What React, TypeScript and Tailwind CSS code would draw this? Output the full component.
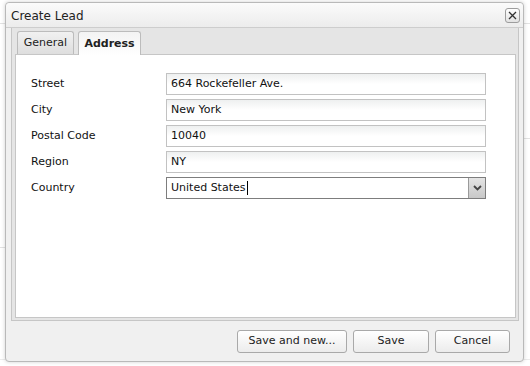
import React from "react";

const font = { fontFamily: '"DejaVu Sans", Verdana, sans-serif' };

function Field({ label, value, select, caret }: { label: string; value: string; select?: boolean; caret?: boolean }) {
  return (
    <div className="flex items-center h-[22px]">
      <div className="w-[135px] text-[11px] text-[#111]">{label}</div>
      {select ? (
        <div className="w-[320px] h-[22px] flex border border-[#7d7d7d] bg-white">
          <div className="flex-1 flex items-center pl-[4px] text-[11px] text-[#111]">
            {value}
            {caret && <span className="inline-block w-px h-[14px] bg-black ml-[1px]" />}
          </div>
          <div className="w-[17px] h-full border-l border-[#9a9a9a] bg-gradient-to-b from-[#e4e4e4] to-[#c8c8c8] flex items-center justify-center">
            <svg width="9" height="6" viewBox="0 0 9 6">
              <path d="M1 1 L4.5 4.5 L8 1" stroke="#444" strokeWidth="1.8" fill="none" />
            </svg>
          </div>
        </div>
      ) : (
        <div className="w-[320px] h-[22px] flex items-center pl-[4px] border border-[#c2c2c2] bg-gradient-to-b from-[#eef0f0] via-white to-white text-[11px] text-[#111]">
          {value}
        </div>
      )}
    </div>
  );
}

function Btn({ children, w }: { children: React.ReactNode; w: string }) {
  return (
    <div className={`${w} h-[23px] flex items-center justify-center rounded-[3px] border border-[#a9a9a9] bg-gradient-to-b from-white to-[#ececec] text-[11px] text-[#222]`}>
      {children}
    </div>
  );
}

export default function App() {
  return (
    <div className="relative w-[530px] h-[366px] bg-white overflow-hidden" style={font}>
      {/* backdrop page lines */}
      <div className="absolute left-0 top-[23px] w-[6px] h-px bg-[#e2e2e2]" />
      <div className="absolute left-0 top-[247px] w-[6px] h-px bg-[#e2e2e2]" />
      <div className="absolute right-0 top-[23px] w-[6px] h-px bg-[#e2e2e2]" />
      <div className="absolute right-0 top-[138px] w-[6px] h-px bg-[#e2e2e2]" />
      <div className="absolute left-0 top-[359px] w-[530px] h-px bg-[#ececec]" />

      <div className="absolute left-[5px] top-[2px] w-[519px] h-[360px] flex flex-col border border-[#b9b9b9] rounded-[4px] bg-[#f0f0f0] shadow-[0_0_4px_rgba(0,0,0,0.18)]">
        {/* header */}
        <div className="h-[25px] flex items-center justify-between pl-[5px] pr-[3px] border-b border-[#cdcdcd] rounded-t-[4px] bg-gradient-to-b from-[#fbfbfb] to-[#ececec]">
          <span className="text-[12px] text-[#222] pt-[1px]">Create Lead</span>
          <div className="w-[15px] h-[15px] border border-[#9d9d9d] rounded-[3px] bg-gradient-to-b from-white to-[#e2e2e2] flex items-center justify-center">
            <svg width="9" height="9" viewBox="0 0 9 9">
              <path d="M1 1 L8 8 M8 1 L1 8" stroke="#333" strokeWidth="1.3" />
            </svg>
          </div>
        </div>

        {/* tab panel */}
        <div className="h-[293px] ml-[5px] mr-[4px] flex flex-col border-x border-b border-[#c6c6c6] bg-[#e5e5e5]">
          <div className="h-[26px] flex items-end pl-[5px] gap-[4px]">
            <div className="w-[57px] h-[23px] flex items-center justify-center pt-[1px] rounded-t-[3px] border border-b-0 border-[#bcbcbc] bg-gradient-to-b from-[#f1f1f1] to-[#dedede] text-[11px] text-[#222]">
              General
            </div>
            <div className="w-[63px] h-[24px] -mb-px relative z-10 flex items-center justify-center pt-[1px] rounded-t-[3px] border border-b-0 border-[#bcbcbc] bg-gradient-to-b from-[#f3f3f3] to-white text-[11px] font-bold text-[#222]">
              Address
            </div>
          </div>
          <div className="flex-1 ml-[3px] mr-[2px] mb-[2px] border border-[#c6c6c6] bg-white pt-[18px] pl-[15px] flex flex-col gap-[4px]">
            <Field label="Street" value="664 Rockefeller Ave." />
            <Field label="City" value="New York" />
            <Field label="Postal Code" value="10040" />
            <Field label="Region" value="NY" />
            <Field label="Country" value="United States" select caret />
          </div>
        </div>

        {/* footer */}
        <div className="flex-1 flex items-center justify-end gap-[6px] pr-[13px] pt-[1px]">
          <Btn w="w-[110px]">Save and new...</Btn>
          <Btn w="w-[76px]">Save</Btn>
          <Btn w="w-[75px]">Cancel</Btn>
        </div>
      </div>
    </div>
  );
}
